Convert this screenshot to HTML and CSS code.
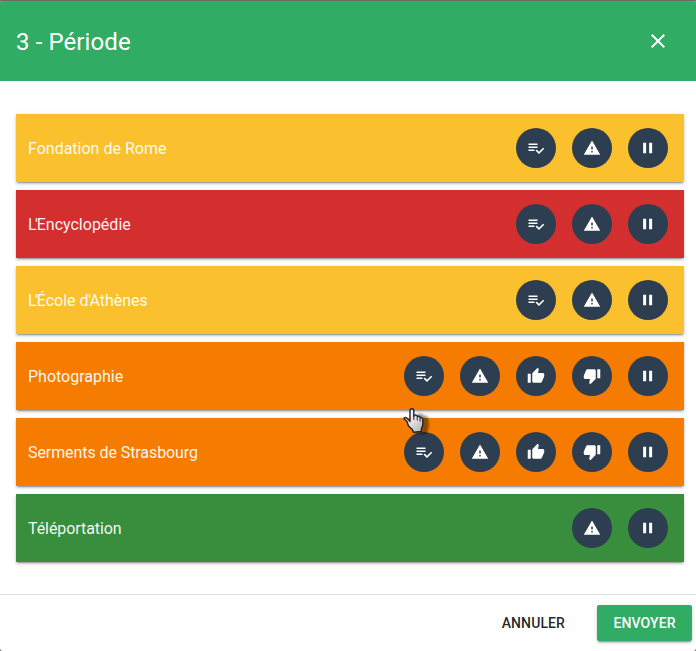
FILE: index.html
```html
<!DOCTYPE html>
<html lang="fr">
<head>
<meta charset="utf-8">
<title>3 - Période</title>
<link rel="stylesheet" href="styles.css">
</head>
<body>
<svg class="sprite" viewBox="0 0 24 24">
  <symbol id="check" viewBox="0 0 24 24"><path d="M14 10H2v2h12v-2zm0-4H2v2h12V6zM2 16h8v-2H2v2zm19.5-4.5L23 13l-6.99 7-4.51-4.5L13 14l3.01 3 5.49-5.5z"/></symbol>
  <symbol id="warning" viewBox="0 0 24 24"><path d="M1 21h22L12 2 1 21zm12-3h-2v-2h2v2zm0-4h-2v-4h2v4z"/></symbol>
  <symbol id="up" viewBox="0 0 24 24"><path d="M1 21h4V9H1v12zm22-11c0-1.100-.9-2-2-2h-6.310l.95-4.570.03-.32c0-.41-.17-.79-.44-1.060L14.170 1 7.590 7.590C7.220 7.950 7 8.450 7 9v10c0 1.100.9 2 2 2h9c.83 0 1.540-.5 1.840-1.220l3.020-7.050c.09-.23.14-.47.14-.73v-2z"/></symbol>
  <symbol id="down" viewBox="0 0 24 24"><path d="M15 3H6c-.83 0-1.540.5-1.840 1.220l-3.020 7.050c-.09.23-.14.47-.14.73v2c0 1.100.9 2 2 2h6.310l-.95 4.570-.03.32c0 .41.17.79.44 1.060L9.830 23l6.590-6.590c.36-.36.58-.86.58-1.410V5c0-1.100-.9-2-2-2zm4 0v12h4V3h-4z"/></symbol>
  <symbol id="pause" viewBox="0 0 24 24"><path d="M5.500 19h4V5h-4v14zm8-14v14h4V5h-4z"/></symbol>
</svg>
<div class="dialog">
  <header class="toolbar">
    <h1 class="title">3 - Période</h1>
    <svg class="close" viewBox="0 0 24 24"><path d="M19 6.410L17.590 5 12 10.590 6.410 5 5 6.410 10.590 12 5 17.590 6.410 19 12 13.410 17.590 19 19 17.590 13.410 12z"/></svg>
  </header>
  <main class="list">
    <div class="row yellow"><span class="label">Fondation de Rome</span>
      <span class="btn"><svg><use href="#check"/></svg></span><span class="btn"><svg><use href="#warning"/></svg></span><span class="btn"><svg><use href="#pause"/></svg></span></div>
    <div class="row red"><span class="label"><span class="elision">L'</span>Encyclopédie</span>
      <span class="btn"><svg><use href="#check"/></svg></span><span class="btn"><svg><use href="#warning"/></svg></span><span class="btn"><svg><use href="#pause"/></svg></span></div>
    <div class="row yellow"><span class="label"><span class="elision">L'</span>École <span class="snug">d'A</span>thènes</span>
      <span class="btn"><svg><use href="#check"/></svg></span><span class="btn"><svg><use href="#warning"/></svg></span><span class="btn"><svg><use href="#pause"/></svg></span></div>
    <div class="row orange"><span class="label">Photographie</span>
      <span class="btn"><svg><use href="#check"/></svg></span><span class="btn"><svg><use href="#warning"/></svg></span><span class="btn"><svg><use href="#up"/></svg></span><span class="btn"><svg><use href="#down"/></svg></span><span class="btn"><svg><use href="#pause"/></svg></span></div>
    <div class="row orange"><span class="label tight">Serments de Strasbourg</span>
      <span class="btn"><svg><use href="#check"/></svg></span><span class="btn"><svg><use href="#warning"/></svg></span><span class="btn"><svg><use href="#up"/></svg></span><span class="btn"><svg><use href="#down"/></svg></span><span class="btn"><svg><use href="#pause"/></svg></span></div>
    <div class="row green"><span class="label tight">Téléportation</span>
      <span class="btn"><svg><use href="#warning"/></svg></span><span class="btn"><svg><use href="#pause"/></svg></span></div>
  </main>
  <footer class="actions">
    <button class="action">Annuler</button>
    <button class="action primary">Envoyer</button>
  </footer>
</div>
<svg class="cursor" viewBox="0 0 32 32">
  <defs>
    <linearGradient id="skin" x1="0" y1="0" x2="1" y2="1"><stop offset="0.3" stop-color="#f4f4f4"/><stop offset="1" stop-color="#b0b0b0"/></linearGradient>
    <filter id="soft" x="-30%" y="-30%" width="160%" height="160%"><feGaussianBlur stdDeviation="1"/></filter>
  </defs>
  <path class="shade" filter="url(#soft)" d="M15 9q3-3 6 0l5 2 1 8-2 9H13l-3-5 5-4z"/>
  <path class="hand" d="M8 5Q8 2.700 9.900 2.700T11.800 5V10.500Q12.300 8.500 14 9.200T15.300 11Q15.800 9.700 17.100 10.300T18.100 12Q19 11.200 20 12T20.800 14.500V19L19.300 23V25.500L11.500 26.300 10.300 23.500 6.500 20 5 15.500 2 12.700Q2.300 11 4 11.600L7 14.200 8 15.500Z"/>
  <path class="fold" d="M11.800 10v4M15.300 11.500v3M18.100 12.500v3"/>
</svg>
</body>
</html>
```
FILE: styles.css
```css
* { box-sizing: border-box; }
body {
  margin: 0;
  height: 651px;
  overflow: hidden;
  background: #666;
  font-family: Roboto, sans-serif;
}
.sprite { display: none; }
.dialog {
  display: flex;
  flex-direction: column;
  height: 651px;
  border-top: 1px solid #6b6b6b;
  border-radius: 3px;
  overflow: hidden;
  background: #fff;
}
.toolbar {
  display: flex;
  align-items: center;
  justify-content: space-between;
  flex: none;
  height: 80px;
  padding: 0 26px 0 16px;
  background: #31ac64;
  color: #fff;
}
.title {
  margin: 0;
  padding-top: 2px;
  font-size: 24px;
  font-weight: 400;
  letter-spacing: 0.1px;
  line-height: 32px;
}
.close { width: 24px; height: 24px; fill: #fff; }
.list {
  display: flex;
  flex-direction: column;
  flex: 1;
  gap: 8px;
  padding: 33px 12px 0 16px;
}
.row {
  display: flex;
  align-items: center;
  gap: 16px;
  height: 68px;
  padding: 0 16px 0 12px;
  color: rgba(255, 255, 255, 0.95);
  font-size: 16px;
  box-shadow: 0 3px 1px -2px rgba(0, 0, 0, 0.2), 0 2px 2px 0 rgba(0, 0, 0, 0.14), 0 1px 5px 0 rgba(0, 0, 0, 0.12);
}
.yellow { background: #fbc02d; }
.red { background: #d32f2f; }
.orange { background: #f57c00; }
.green { background: #388e3c; }
.label { flex: 1; }
.elision { letter-spacing: -1.5px; margin-right: 0.3px; }
.snug { letter-spacing: -0.4px; }
.tight { letter-spacing: -0.08px; }
.btn {
  display: flex;
  align-items: center;
  justify-content: center;
  width: 40px;
  height: 40px;
  border-radius: 50%;
  background: #2c3e50;
}
.btn svg { width: 18px; height: 18px; fill: #fff; }
.actions {
  display: flex;
  align-items: center;
  justify-content: flex-end;
  gap: 16px;
  flex: none;
  height: 57px;
  padding-right: 4px;
  border-top: 1px solid #dedede;
}
.action {
  height: 36px;
  padding: 0 16px;
  border: 0;
  border-radius: 2px;
  background: none;
  color: rgba(0, 0, 0, 0.87);
  font: 500 14px/36px Roboto, sans-serif;
  letter-spacing: 0.1px;
  text-transform: uppercase;
}
.primary {
  min-width: 95px;
  background: #31ac64;
  color: #fff;
  box-shadow: 0 3px 1px -2px rgba(0, 0, 0, 0.2), 0 2px 2px 0 rgba(0, 0, 0, 0.14), 0 1px 5px 0 rgba(0, 0, 0, 0.12);
}
.cursor {
  position: absolute;
  left: 402px;
  top: 406px;
  width: 32px;
  height: 32px;
}
.shade { fill: rgba(0, 0, 0, 0.42); }
.hand { fill: url(#skin); stroke: #20242b; stroke-width: 1.4; stroke-linejoin: round; }
.fold { fill: none; stroke: #30343b; stroke-width: 1; }
```
